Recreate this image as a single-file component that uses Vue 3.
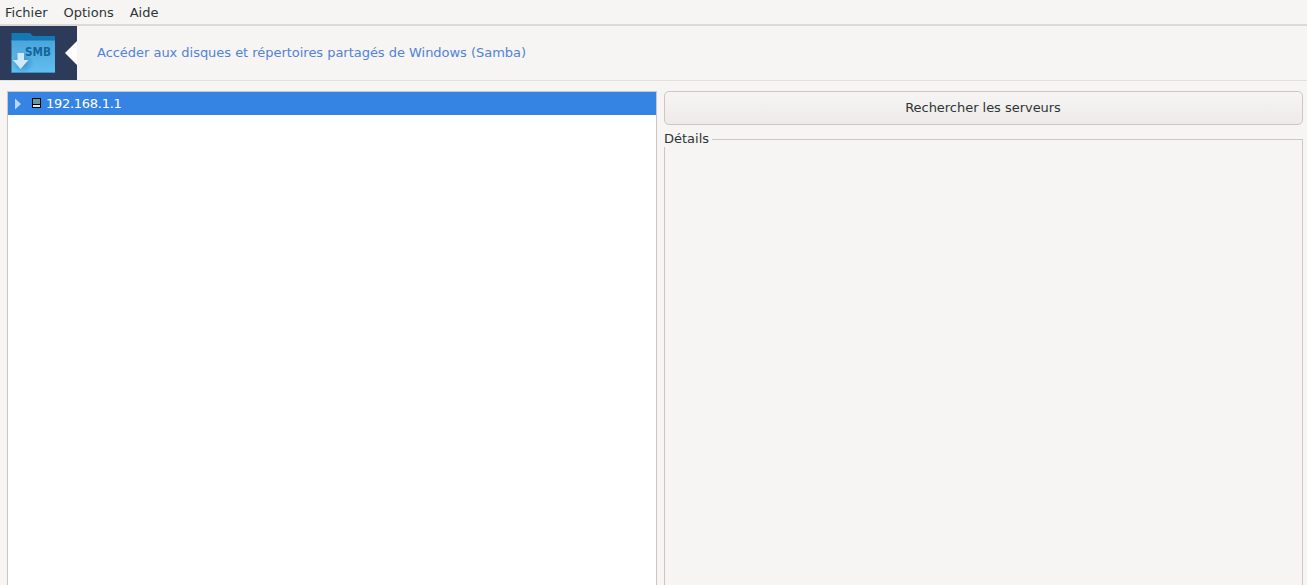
<script setup>
const menus = ['Fichier', 'Options', 'Aide']
</script>

<template>
  <div class="window">
    <nav class="menubar">
      <span v-for="m in menus" :key="m" class="menu">{{ m }}</span>
    </nav>
    <header class="banner">
      <div class="logo">
        <svg width="46" height="42" viewBox="0 0 46 42">
          <defs>
            <linearGradient id="front" x1="0" y1="0" x2="0" y2="1">
              <stop offset="0" stop-color="#4aa5da" />
              <stop offset="1" stop-color="#62bff1" />
            </linearGradient>
            <radialGradient id="shade" cx="0.5" cy="0.5" r="0.5">
              <stop offset="0" stop-color="#1f6a9f" stop-opacity="0.55" />
              <stop offset="1" stop-color="#1f6a9f" stop-opacity="0" />
            </radialGradient>
          </defs>
          <path d="M1.500 2a1 1 0 0 1 1-1h17.500l3 3h21a1 1 0 0 1 1 1V12H1.500z" fill="#1478b4" />
          <rect x="1.500" y="8" width="43.500" height="33" rx="1" fill="url(#front)" />
          <rect x="1.500" y="8" width="43.500" height="1" fill="#2e8fc8" />
          <rect x="1.500" y="40" width="43.500" height="1" fill="#3a93c9" />
          <circle cx="13" cy="31" r="11" fill="url(#shade)" />
          <path d="M7.500 21h6.500v7h4.500L10.500 37 3 28h4.500z" fill="#cfe9f9" />
          <text x="28" y="24" class="smb" text-anchor="middle" textLength="26" lengthAdjust="spacingAndGlyphs">SMB</text>
        </svg>
        <span class="notch"></span>
      </div>
      <h1 class="title">Accéder aux disques et répertoires partagés de Windows (Samba)</h1>
    </header>
    <main class="content">
      <section class="tree">
        <div class="row">
          <svg class="arrow" width="8" height="12" viewBox="0 0 8 12"><path d="M1 0.500 7 6l-6 5.500z" fill="#b9d6f7" /></svg>
          <svg class="host" width="9" height="10" viewBox="0 0 9 10">
            <rect x="0" y="0" width="9" height="10" fill="#000" />
            <rect x="1" y="1" width="7" height="5" fill="#5f9ea0" />
            <rect x="1" y="7" width="7" height="2" fill="#e6e6e6" />
          </svg>
          <span class="ip">192.168.1.1</span>
        </div>
      </section>
      <section class="side">
        <button class="search" type="button">Rechercher les serveurs</button>
        <fieldset class="details">
          <legend>Détails</legend>
        </fieldset>
      </section>
    </main>
  </div>
</template>

<style>
html, body { margin: 0; overflow: hidden; background: #f6f5f4; }
</style>

<style scoped>
.window {
  width: 1307px;
  height: 585px;
  overflow: hidden;
  display: flex;
  flex-direction: column;
  background: #f6f5f4;
  color: #2e3436;
  font-family: "DejaVu Sans", sans-serif;
  font-size: 13px;
}
.menubar {
  height: 22px;
  flex: none;
  display: flex;
  gap: 16px;
  padding: 2px 0 0 5px;
  align-items: center;
  border-bottom: 2px solid #dcdad6;
  line-height: 22px;
}
.banner {
  height: 54px;
  flex: none;
  display: flex;
  align-items: center;
  border-bottom: 1px solid #e2e0dc;
  background: #f6f5f4;
}
.logo {
  position: relative;
  width: 77px;
  height: 54px;
  flex: none;
  background: #2c3b5a;
  display: flex;
  align-items: center;
  padding-left: 10px;
  box-sizing: border-box;
}
.notch {
  position: absolute;
  right: 0;
  top: 15px;
  width: 0;
  height: 0;
  border-top: 12px solid transparent;
  border-bottom: 12px solid transparent;
  border-right: 12px solid #fff;
}
.smb {
  font-family: "DejaVu Sans", sans-serif;
  font-size: 13px;
  font-weight: 700;
  fill: #14659c;
}
.title {
  margin: 0 0 2px 20px;
  font-size: 13px;
  font-weight: 400;
  letter-spacing: -0.03px;
  color: #5182d8;
}
.content {
  flex: 1;
  display: flex;
  gap: 7px;
  padding: 10px 4px 0 7px;
  min-height: 0;
}
.tree {
  width: 650px;
  box-sizing: border-box;
  flex: none;
  background: #fff;
  border: 1px solid #cdc7c2;
  border-bottom: 0;
  height: 520px;
}
.row {
  height: 23px;
  background: #3584e4;
  color: #fff;
  display: flex;
  align-items: center;
  padding-left: 6px;
}
.arrow { flex: none; margin-top: 1px; }
.host { flex: none; margin: -1px 0 0 10px; }
.ip { margin-left: 5px; letter-spacing: -0.27px; }
.side {
  flex: 1;
  min-width: 0;
  display: flex;
  flex-direction: column;
}
.search {
  height: 34px;
  flex: none;
  padding: 0 1px 2px 0;
  font: inherit;
  letter-spacing: -0.03px;
  color: #2e3436;
  border: 1px solid #cdc7c2;
  border-radius: 5px;
  background: linear-gradient(#f6f5f4, #edebe9);
}
.details {
  flex: 1;
  margin: 6px 0 0;
  padding: 0;
  min-width: 0;
  border: 1px solid #cdc7c2;
  border-bottom: 0;
  height: 470px;
}
.details legend {
  padding: 0 3px 0 0;
  margin-left: -1px;
  font-size: 13px;
  line-height: 16px;
  color: #2e3436;
}
</style>
